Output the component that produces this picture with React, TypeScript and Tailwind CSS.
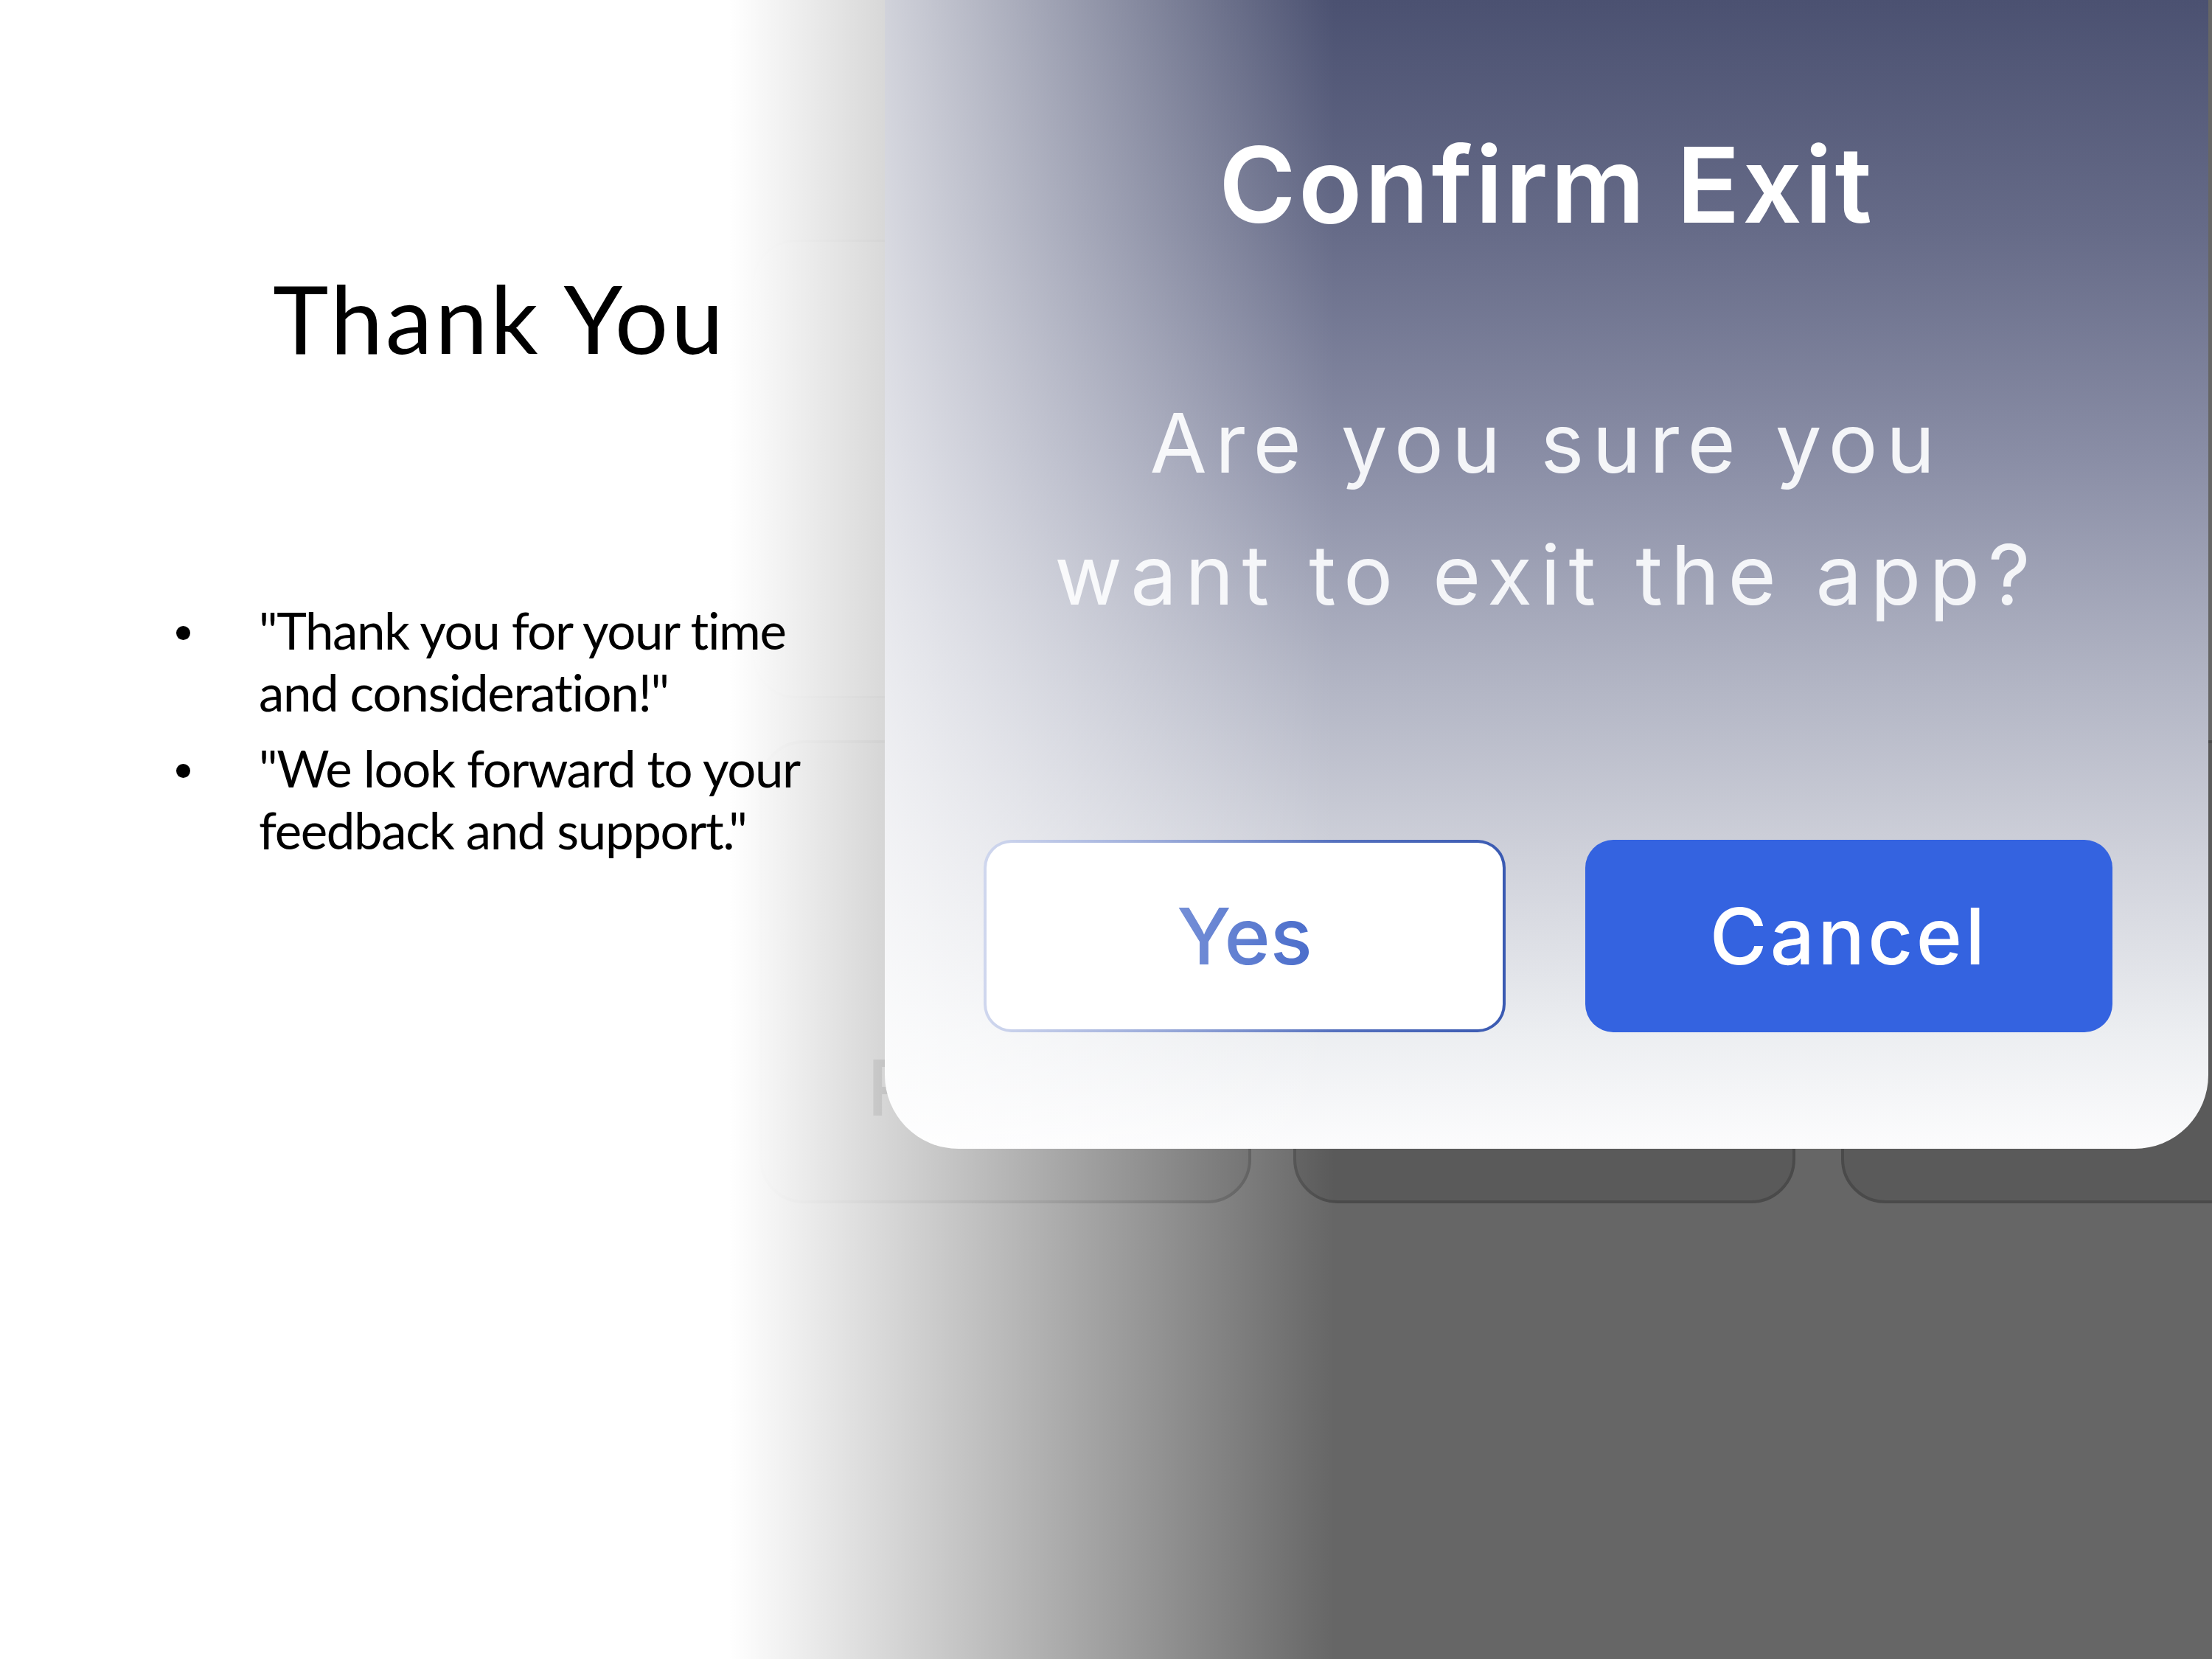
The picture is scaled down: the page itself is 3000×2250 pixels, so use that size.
export default function App() {
  return (
    <div className="w-[3000px] h-[2250px] bg-white flex overflow-hidden">
      {/* Slide text */}
      <div className="relative z-10 w-[990px] shrink-0 font-['Lato',sans-serif] text-black">
        <h1 className="pt-[367px] pl-[370px] text-[128px] leading-none whitespace-nowrap font-normal tracking-[0.027em]">
          Thank You
        </h1>
        <div className="mt-[318px] flex flex-col gap-[19px]">
          <div className="flex pl-[239px]">
            <span className="mt-[36px] w-[19px] h-[19px] rounded-full bg-black shrink-0" />
            <p className="ml-[93px] text-[69px] leading-[84px] tracking-[-0.02em] whitespace-nowrap">
              "Thank you for your time
              <br />
              and consideration!"
            </p>
          </div>
          <div className="flex pl-[239px]">
            <span className="mt-[36px] w-[19px] h-[19px] rounded-full bg-black shrink-0" />
            <p className="ml-[93px] text-[69px] leading-[84px] tracking-[-0.02em] whitespace-nowrap">
              "We look forward to your
              <br />
              feedback and support."
            </p>
          </div>
        </div>
      </div>

      {/* Picture: app screenshot with confirm dialog */}
      <div className="relative flex-1 h-full bg-[#666666] overflow-hidden">
        <div className="flex flex-col pt-[325px] pl-[30px] gap-[57px]">
          <div className="w-[1700px] h-[622px] rounded-[60px] bg-[#6b6b6b] border-[3px] border-[#5a5a5a]" />
          <div className="flex pl-[10px]">
            <div className="w-[667px] h-[628px] shrink-0 rounded-[60px] bg-[#5e5e5e] border-[4px] border-[#4a4a4a] pl-[142px] pt-[414px] font-['Inter',sans-serif] text-[105px] leading-none font-medium text-[#1a1a1a] whitespace-nowrap overflow-hidden">
              Reports
            </div>
            <div className="ml-[57px] w-[681px] h-[628px] shrink-0 rounded-[60px] bg-[#5a5a5a] border-[4px] border-[#4a4a4a]" />
            <div className="ml-[62px] w-[700px] h-[628px] shrink-0 rounded-[60px] bg-[#5a5a5a] border-[4px] border-[#4a4a4a]" />
          </div>
        </div>

        {/* Dialog card */}
        <div className="absolute left-[210px] top-0 w-[1795px] h-[1558px] rounded-b-[100px] bg-[linear-gradient(180deg,#4b5171_0%,#666b88_20%,#8a8ea6_40%,#b3b6c5_60%,#d0d2db_75%,#eceef1_90%,#fcfcfd_100%)] flex flex-col items-center font-['Inter',sans-serif]">
          <div className="pt-[179px] text-[142px] leading-none font-semibold text-white tracking-[0.025em] whitespace-nowrap">
            Confirm Exit
          </div>
          <div className="mt-[190px] text-[112px] leading-[179px] text-center text-[#f4f5f8] tracking-[0.1em] whitespace-nowrap">
            Are you sure you
            <br />
            want to exit the app?
          </div>
          <div className="mt-[270px] self-stretch flex gap-[108px] pl-[134px]">
            <div className="w-[708px] h-[261px] rounded-[38px] border-[4px] border-transparent [background:linear-gradient(#ffffff,#ffffff)_padding-box,linear-gradient(90deg,#8d9fd6,#3a5ab2)_border-box] flex items-center justify-center text-[106px] leading-none font-medium text-[#4468c9]">
              Yes
            </div>
            <div className="w-[715px] h-[261px] rounded-[38px] bg-[#3463e0] flex items-center justify-center text-[106px] leading-none font-medium text-white tracking-[0.04em]">
              Cancel
            </div>
          </div>
        </div>

        {/* Fade to white on the left */}
        <div className="absolute inset-0 pointer-events-none bg-[linear-gradient(90deg,#ffffff_0px,rgba(255,255,255,0)_820px)]" />
      </div>
    </div>
  );
}
